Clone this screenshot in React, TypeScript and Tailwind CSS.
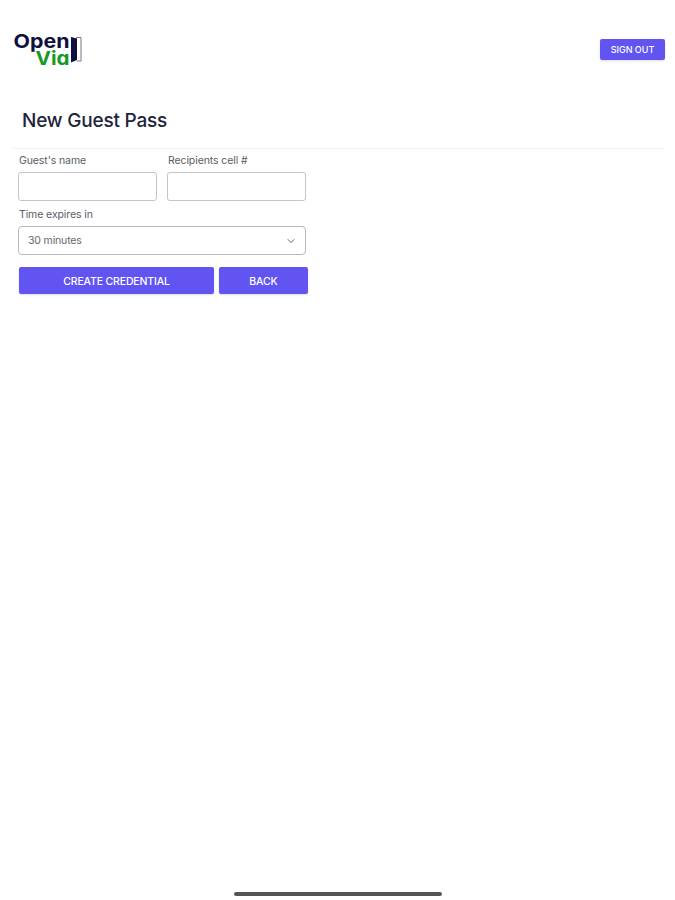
import { useState } from 'react';
import type { ReactNode } from 'react';
import { ChevronDown } from 'lucide-react';

const DURATIONS = ['30 minutes', '1 hour', '2 hours', '4 hours'];

function Logo() {
  return (
    <svg
      width="70"
      height="42"
      viewBox="0 0 70 42"
      role="img"
      aria-label="Open Via"
      className="overflow-visible"
      fontFamily="Inter, sans-serif"
      fontWeight="700"
      style={{ fontFeatureSettings: '"cv11"' }}
    >
      <text x="-0.5" y="17.3" fontSize="19" fill="#10103e" textLength="56" lengthAdjust="spacingAndGlyphs">
        Open
      </text>
      <text x="21.5" y="34" fontSize="19" fill="#189a20" textLength="34" lengthAdjust="spacingAndGlyphs">
        Via
      </text>
      <path d="M57 6 L63 7.5 V29 L57 31.5 Z" fill="#10103e" />
      <path d="M62 6.5 H67 V30 H63" fill="none" stroke="#66667f" strokeWidth="0.9" />
    </svg>
  );
}

function Field({ label, id, children }: { label: string; id: string; children: ReactNode }) {
  return (
    <div className="flex flex-col">
      <label htmlFor={id} className="h-[18px] pl-px text-[10.5px] leading-[13px] tracking-[-0.1px] text-[#5b5d63]">
        {label}
      </label>
      {children}
    </div>
  );
}

export default function App() {
  const [name, setName] = useState('');
  const [cell, setCell] = useState('');
  const [duration, setDuration] = useState(DURATIONS[0]);

  return (
    <div className="flex h-[900px] w-[675px] flex-col bg-white font-['Inter',sans-serif]">
      {/* Header */}
      <header className="flex h-[67px] items-start justify-between pt-[31px] pr-[10px] pl-[14px]">
        <Logo />
        <button className="mt-2 h-[21px] w-[65px] rounded-[2px] bg-[#6254f0] text-[9px] font-medium text-white shadow-sm">
          SIGN OUT
        </button>
      </header>

      <h1 className="mt-[39px] ml-[22px] h-[42px] text-[19px] leading-[29px] font-medium tracking-[-0.2px] text-[#20243c]">
        New Guest Pass
      </h1>
      <hr className="mr-[10px] ml-[13px] border-[#f0f0f2]" />

      {/* Guest pass form */}
      <form className="ml-[18px] w-[290px] pt-[5px]" onSubmit={(e) => e.preventDefault()}>
        <div className="grid w-[288px] grid-cols-2 gap-[10px]">
          <Field label="Guest's name" id="name">
            <input
              id="name"
              value={name}
              onChange={(e) => setName(e.target.value)}
              className="h-[29px] w-full rounded-[3px] border border-[#c4c5c8] px-2 text-[10.5px] outline-none"
            />
          </Field>
          <Field label="Recipients cell #" id="cell">
            <input
              id="cell"
              value={cell}
              onChange={(e) => setCell(e.target.value)}
              className="h-[29px] w-full rounded-[3px] border border-[#c4c5c8] px-2 text-[10.5px] outline-none"
            />
          </Field>
        </div>

        <div className="mt-[7px] w-[288px]">
          <Field label="Time expires in" id="duration">
            <div className="grid items-center">
              <select
                id="duration"
                value={duration}
                onChange={(e) => setDuration(e.target.value)}
                className="col-start-1 row-start-1 h-[29px] w-full appearance-none rounded-[4px] border border-[#b7b8bb] bg-white pl-[9px] text-[10.5px] tracking-[-0.15px] text-[#66686d] outline-none"
              >
                {DURATIONS.map((d) => (
                  <option key={d}>{d}</option>
                ))}
              </select>
              <ChevronDown className="pointer-events-none col-start-1 row-start-1 mr-[9px] size-3 justify-self-end text-[#66686d]" />
            </div>
          </Field>
        </div>

        <div className="mt-3 flex gap-[5px] pl-px">
          <button className="h-[27px] w-[195px] rounded-[2px] bg-[#6254f0] pt-[2px] text-[10.5px] font-medium tracking-[-0.15px] text-white shadow-sm">
            CREATE CREDENTIAL
          </button>
          <button type="button" className="h-[27px] w-[89px] rounded-[2px] bg-[#6254f0] pt-[2px] text-[10.5px] font-medium tracking-[-0.15px] text-white shadow-sm">
            BACK
          </button>
        </div>
      </form>

      {/* Home indicator */}
      <div className="mt-auto mb-[4px] ml-[234px] h-[4px] w-[208px] rounded-full bg-[#555555]" />
    </div>
  );
}
